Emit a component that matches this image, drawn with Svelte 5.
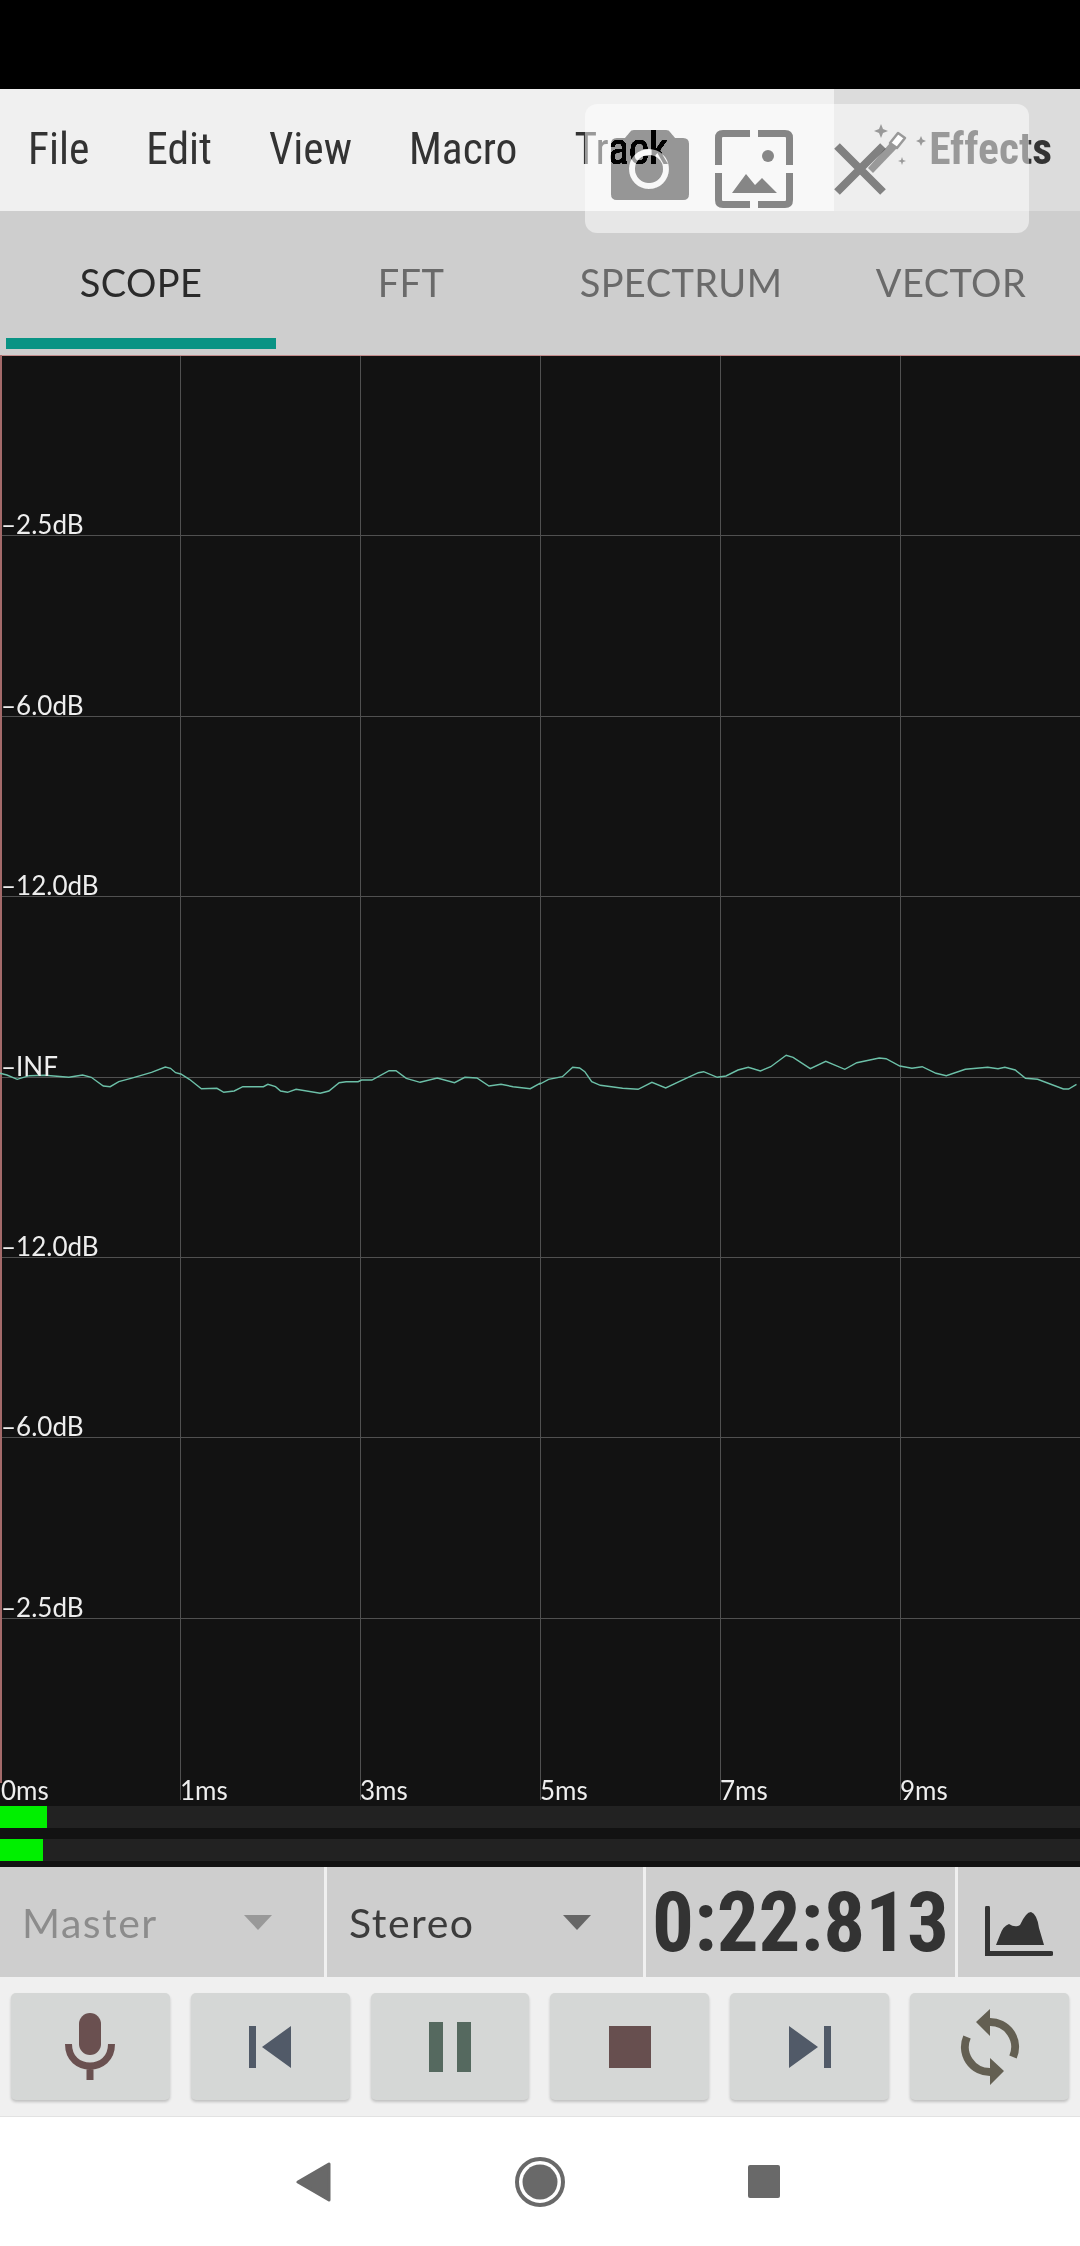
<script>
  const menus = ['File', 'Edit', 'View', 'Macro', 'Track'];
  const tabs = ['SCOPE', 'FFT', 'SPECTRUM', 'VECTOR'];

  // scope grid
  const hLines = [535, 716, 896, 1077, 1257, 1437, 1618].map((y) => y - 355);
  const vLines = [180, 360, 540, 720, 900];
  const dbLabels = ['–2.5dB', '–6.0dB', '–12.0dB', '–INF', '–12.0dB', '–6.0dB', '–2.5dB'];
  const msLabels = ['0ms', '1ms', '3ms', '5ms', '7ms', '9ms'];

  // waveform, read off the reference in two halves
  const left = [[0,130],[20,135],[50,148],[85,137],[130,136],[200,142],[240,135],[265,142],[300,168],[320,170],[345,155],[380,145],[440,127],[480,111],[495,115],[510,128],[525,132],[550,148],[585,176],[630,175],[650,187],[680,183],[705,170],[765,170],[778,163],[800,170],[815,183],[835,187],[860,178],[930,190],[955,183],[985,158],[1005,155],[1040,155],[1050,150],[1080,150],[1130,122],[1150,122],[1180,145],[1220,157],[1270,144],[1320,158],[1350,142],[1385,144],[1420,168],[1455,163],[1490,170],[1540,176],[1568,160]];
  const right = [[0,162],[25,148],[65,140],[95,112],[115,114],[130,125],[150,155],[175,166],[240,175],[285,178],[325,157],[365,174],[410,152],[460,128],[475,125],[515,142],[540,138],[575,120],[605,112],[640,123],[670,110],[715,76],[735,82],[785,116],[830,94],[885,118],[920,98],[985,84],[1005,86],[1045,108],[1080,115],[1110,110],[1150,130],[1180,137],[1235,118],[1300,112],[1330,116],[1350,112],[1380,120],[1410,145],[1445,148],[1520,177],[1535,177],[1558,163]];
  const toPoint = (offset) => ([x, y]) => `${(offset + x / 2.904).toFixed(1)},${(y / 3 + 1030 - 355).toFixed(1)}`;
  const wave = [...left.map(toPoint(0)), ...right.map(toPoint(540))].join(' ');
</script>

<div class="page">
  <div class="status"></div>

  <nav class="menu">
    {#each menus as m}
      <span class="item">{m}</span>
    {/each}
    <div class="effects">
      <svg class="wand" width="70" height="60" viewBox="0 0 70 60">
        <path d="M8 46 L30 21 L37 26 L13 51 Z" fill="#333" />
        <path d="M30 21 L38 11 L45 16 L37 26 Z" fill="#fff" stroke="#333" stroke-width="2.5" stroke-linejoin="round" />
        <path d="M21 2 L23 7 L28 9 L23 11 L21 16 L19 11 L14 9 L19 7 Z" fill="#333" />
        <path d="M61 14 L62.500 17.500 L66 19 L62.500 20.500 L61 24 L59.500 20.500 L56 19 L59.500 17.500 Z" fill="#333" />
        <path d="M42 35 L43 38 L46 39 L43 40 L42 43 L41 40 L38 39 L41 38 Z" fill="#333" />
      </svg>
      <span class="item bold">Effects</span>
    </div>
  </nav>

  <div class="tabs">
    {#each tabs as t, i}
      <div class="tab" class:active={i === 0}>{t}</div>
    {/each}
  </div>

  <div class="scope">
    <svg class="plot" width="1080" height="1512" viewBox="0 0 1080 1512">
      {#each hLines as y}
        <line x1="0" x2="1080" y1={y + 0.5} y2={y + 0.5} class="grid" />
      {/each}
      {#each vLines as x}
        <line x1={x + 0.5} x2={x + 0.5} y1="0" y2="1445" class="grid" />
      {/each}
      <line x1="0" x2="1080" y1="0.5" y2="0.500" class="edge" />
      <line x1="1" x2="1" y1="0" y2="1428" class="edge wide" />
      <polyline points={wave} class="wave" />
      {#each dbLabels as label, i}
        <text x="1" y={hLines[i] - 1} class="label">{label}</text>
      {/each}
      {#each msLabels as label, i}
        <text x={i === 0 ? 1 : i * 180} y="1445" class="label">{label}</text>
      {/each}
    </svg>
    <div class="meter first"><div class="level l1"></div></div>
    <div class="meter"><div class="level l2"></div></div>
  </div>

  <div class="controls">
    <div class="select first">
      <span class="muted">Master</span>
      <i class="caret light"></i>
    </div>
    <div class="select second">
      <span>Stereo</span>
      <i class="caret"></i>
    </div>
    <div class="timer">0:22:813</div>
    <div class="graph">
      <svg width="68" height="50" viewBox="0 0 68 50">
        <path d="M2.500 2 V47.500 H66" fill="none" stroke="#333" stroke-width="5" stroke-linecap="round" />
        <path d="M11 39 L15 29 Q18 20 24 18 Q30 22 35 19 Q41 6 46 6 Q52 8 54 22 L59 39 Z" fill="#333" />
      </svg>
    </div>
  </div>

  <div class="transport">
    <button>
      <svg width="50" height="68" viewBox="0 0 50 68">
        <rect x="14" y="0" width="22" height="42" rx="11" fill="#6a5050" />
        <path d="M3.500 31 C3.500 46 14 53 25 53 C36 53 46.500 46 46.500 31 M25 53 V67" fill="none" stroke="#6a5050" stroke-width="7" />
      </svg>
    </button>
    <button>
      <svg width="44" height="44" viewBox="0 0 44 44">
        <path d="M1 1 H8 V43 H1 Z M43 1 V43 L14 22 Z" fill="#515a68" />
      </svg>
    </button>
    <button>
      <svg width="44" height="50" viewBox="0 0 44 50">
        <path d="M1 0 H15 V50 H1 Z M29 0 H43 V50 H29 Z" fill="#55695f" />
      </svg>
    </button>
    <button>
      <svg width="42" height="42" viewBox="0 0 42 42">
        <rect width="42" height="42" fill="#674f4f" />
      </svg>
    </button>
    <button>
      <svg width="44" height="44" viewBox="0 0 44 44">
        <path d="M1 1 V43 L30 22 Z M36 1 H43 V43 H36 Z" fill="#515a68" />
      </svg>
    </button>
    <button>
      <svg width="80" height="80" viewBox="-40 -40 80 80">
        <path d="M0 -25 A25 25 0 0 1 23 10 M0 25 A25 25 0 0 1 -23 -10" fill="none" stroke="#635f52" stroke-width="8" />
        <path d="M0 -38 L-14 -25 L0 -11 Z M0 38 L14 24 L0 11 Z" fill="#635f52" />
      </svg>
    </button>
  </div>

  <div class="navbar">
    <svg class="back" width="35" height="40" viewBox="0 0 35 40">
      <path d="M2 20 L33 2 V38 Z" fill="#696969" stroke="#696969" stroke-width="3" stroke-linejoin="round" />
    </svg>
    <svg width="50" height="50" viewBox="0 0 50 50">
      <circle cx="25" cy="25" r="23" fill="none" stroke="#696969" stroke-width="4" />
      <circle cx="25" cy="25" r="17.500" fill="#696969" />
    </svg>
    <svg class="square" width="32" height="33" viewBox="0 0 32 33">
      <rect width="32" height="33" rx="2" fill="#696969" />
    </svg>
  </div>

  <!-- screenshot toolbar floating over the menu -->
  <div class="shot">
    <svg class="camera" width="78" height="78" viewBox="0 0 78 78">
      <path fill-rule="evenodd" fill="#111" d="M19 2 Q20 0 23 0 H55 Q58 0 59 2 L64 8 H72 Q78 8 78 14 V64 Q78 70 72 70 H6 Q0 70 0 64 V14 Q0 8 6 8 H14 Z M38 19 A20 20 0 1 0 38 59 A20 20 0 1 0 38 19 Z M38 25 A14 14 0 1 1 38 53 A14 14 0 1 1 38 25 Z" />
    </svg>
    <svg class="picture" width="78" height="78" viewBox="0 0 78 78">
      <path d="M35 3.500 H8 Q3.500 3.500 3.500 8 V35 M43 3.500 H70 Q74.500 3.500 74.500 8 V35 M35 74.500 H8 Q3.500 74.500 3.500 70 V43 M43 74.500 H70 Q74.500 74.500 74.500 70 V43" fill="none" stroke="#8a8a8a" stroke-width="7" />
      <circle cx="53" cy="26" r="6" fill="#8a8a8a" />
      <path d="M17 63 L31 44 L40 55 L47 48 L62 63 Z" fill="#8a8a8a" />
    </svg>
    <svg class="close" width="54" height="54" viewBox="0 0 54 54">
      <path d="M4 4 L50 50 M50 4 L4 50" stroke="#8a8a8a" stroke-width="8" />
    </svg>
  </div>
</div>

<style>
  :global(body) {
    margin: 0;
    background: #fff;
  }

  .page {
    position: relative;
    width: 1080px;
    height: 2246px;
    overflow: hidden;
    display: flex;
    flex-direction: column;
    font-family: Lato, sans-serif;
  }

  .status {
    height: 89px;
    background: #000;
  }

  .menu {
    height: 122px;
    box-sizing: border-box;
    display: flex;
    align-items: center;
    gap: 57px;
    padding-left: 28px;
    background: #f0f0f0;
  }

  .item {
    font-family: Roboto, sans-serif;
    font-stretch: 75%;
    font-size: 43.5px;
    color: #333;
    margin-top: -1px;
  }

  .bold {
    font-weight: 700;
  }

  .effects {
    margin-left: auto;
    width: 246px;
    height: 100%;
    box-sizing: border-box;
    background: #dcdcdc;
    display: flex;
    align-items: center;
    justify-content: flex-end;
    padding-right: 28px;
    position: relative;
  }

  .wand {
    position: absolute;
    left: 26px;
    top: 33px;
  }

  .tabs {
    height: 144px;
    background: #cecece;
    padding-left: 6px;
    display: grid;
    grid-template-columns: repeat(4, 270px);
    box-sizing: border-box;
  }

  .tab {
    height: 138px;
    box-sizing: border-box;
    padding-top: 48px;
    text-align: center;
    font-size: 38px;
    letter-spacing: 0.4px;
    line-height: 46px;
    color: #6a6a6a;
  }

  .tab.active {
    color: #2a2a2a;
    border-bottom: 11px solid #0a9384;
  }

  .scope {
    height: 1512px;
    background: #121212;
    display: flex;
    flex-direction: column;
  }

  .plot {
    position: absolute;
    left: 0;
    top: 355px;
  }

  .grid {
    stroke: #505050;
    stroke-width: 1;
  }

  .edge {
    stroke: #c48c8c;
    stroke-width: 1;
  }

  .edge.wide {
    stroke: #a46a6a;
    stroke-width: 2;
  }

  .wave {
    fill: none;
    stroke: #6cc0a8;
    stroke-width: 1.4;
  }

  .label {
    font-family: Lato, sans-serif;
    font-size: 26px;
    fill: #eee;
  }

  .meter {
    flex: none;
    height: 22px;
    margin-bottom: 11px;
    background: #222;
  }

  .meter.first {
    margin-top: 1451px;
  }

  .level {
    height: 100%;
    background: #00f000;
  }

  .l1 {
    width: 47px;
  }

  .l2 {
    width: 43px;
  }

  .controls {
    height: 110px;
    background: #cecece;
    display: flex;
    font-size: 41px;
    color: #3c3c3c;
  }

  .select {
    display: flex;
    align-items: center;
    box-sizing: border-box;
    border-right: 3px solid #f0f0f0;
    letter-spacing: 1.5px;
  }

  .select.first {
    width: 327px;
    padding-left: 22px;
  }

  .select.second {
    width: 319px;
    padding-left: 22px;
  }

  .muted {
    color: #8c8c8c;
  }

  .caret {
    width: 0;
    height: 0;
    border-left: 14px solid transparent;
    border-right: 14px solid transparent;
    border-top: 15px solid #666;
    margin-left: auto;
    margin-right: 52px;
  }

  .caret.light {
    border-top-color: #999;
  }

  .timer {
    width: 312px;
    box-sizing: border-box;
    border-right: 3px solid #f0f0f0;
    padding: 1px 0 0 6px;
    font-family: Roboto, sans-serif;
    font-stretch: 75%;
    font-weight: 700;
    font-size: 83px;
    line-height: 110px;
    color: #333;
  }

  .graph {
    flex: 1;
    display: flex;
    align-items: center;
    padding: 18px 0 0 27px;
  }

  .transport {
    height: 140px;
    box-sizing: border-box;
    padding: 16px 11px 0;
    background: #f0f0f0;
    border-bottom: 1px solid #e2e2e2;
    display: flex;
    gap: 21px;
  }

  .transport button {
    flex: 1;
    height: 107px;
    padding: 0;
    border: 0;
    border-radius: 5px;
    background: #d5d7d6;
    box-shadow: 0 2px 3px rgba(0, 0, 0, 0.2);
    display: flex;
    align-items: center;
    justify-content: center;
  }

  .navbar {
    flex: 1;
    background: #fff;
    display: flex;
    align-items: center;
    justify-content: center;
    gap: 185px;
    padding-right: 4px;
  }

  .back {
    margin-right: -1px;
  }

  .square {
    margin-left: -2px;
  }

  .shot {
    position: absolute;
    left: 585px;
    top: 104px;
    width: 444px;
    height: 129px;
    box-sizing: border-box;
    padding-left: 26px;
    border-radius: 12px;
    background: rgba(255, 255, 255, 0.5);
    display: flex;
    align-items: center;
  }

  .camera {
    mix-blend-mode: color-burn;
  }

  .picture {
    margin-left: 26px;
    mix-blend-mode: multiply;
  }

  .close {
    margin-left: 40px;
    mix-blend-mode: multiply;
  }
</style>
